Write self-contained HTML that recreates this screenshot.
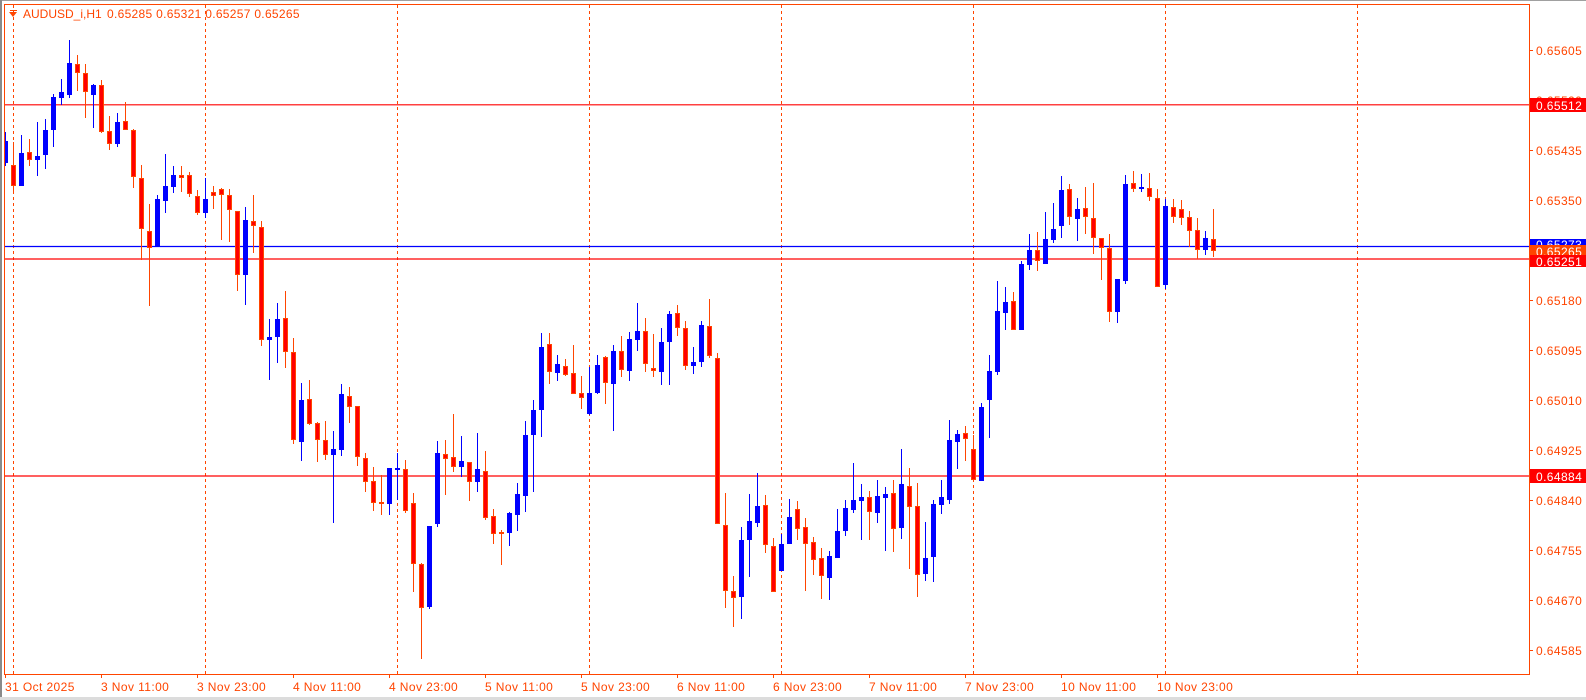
<!DOCTYPE html>
<html><head><meta charset="utf-8">
<style>
html,body{margin:0;padding:0;background:#fff;}
body{width:1586px;height:700px;overflow:hidden;position:relative;}
svg{position:absolute;left:0;top:0;}
text{font-family:"Liberation Sans",sans-serif;font-size:12px;}
</style></head><body>
<svg id="s" width="1586" height="700" viewBox="0 0 1586 700" xmlns="http://www.w3.org/2000/svg">
<rect x="0" y="0" width="1586" height="700" fill="#fff"/>
<rect x="0" y="0" width="1586" height="1" fill="#a0a0a0"/>
<rect x="0" y="0" width="2" height="700" fill="#8a8a8a"/>
<rect x="0" y="697" width="1586" height="3" fill="#dcdcdc"/>
<g id="grid" stroke="#ff4500" stroke-width="1" stroke-dasharray="3,3">
<line x1="13.5" y1="5" x2="13.5" y2="674"/>
<line x1="205.5" y1="5" x2="205.5" y2="674"/>
<line x1="397.5" y1="5" x2="397.5" y2="674"/>
<line x1="589.5" y1="5" x2="589.5" y2="674"/>
<line x1="781.5" y1="5" x2="781.5" y2="674"/>
<line x1="973.5" y1="5" x2="973.5" y2="674"/>
<line x1="1165.5" y1="5" x2="1165.5" y2="674"/>
<line x1="1357.5" y1="5" x2="1357.5" y2="674"/>
</g>
<g stroke-width="1.2">
<line x1="4" y1="104.8" x2="1529" y2="104.8" stroke="#ff0000"/>
<line x1="4" y1="246.5" x2="1529" y2="246.5" stroke="#0000ff"/>
<line x1="4" y1="259" x2="1529" y2="259" stroke="#ff0000"/>
<line x1="4" y1="476" x2="1529" y2="476" stroke="#ff0000"/>
</g>
<g id="candles"></g>
<rect x="4.5" y="4.5" width="1525" height="670" fill="none" stroke="#ff4500" stroke-width="1"/>
<g stroke="#ff4500">
<line x1="1529" y1="50.5" x2="1533" y2="50.5"/><line x1="1529" y1="100.5" x2="1533" y2="100.5"/>
<line x1="1529" y1="150.5" x2="1533" y2="150.5"/><line x1="1529" y1="200.5" x2="1533" y2="200.5"/>
<line x1="1529" y1="300.5" x2="1533" y2="300.5"/><line x1="1529" y1="350.5" x2="1533" y2="350.5"/>
<line x1="1529" y1="400.5" x2="1533" y2="400.5"/><line x1="1529" y1="450.5" x2="1533" y2="450.5"/>
<line x1="1529" y1="500.5" x2="1533" y2="500.5"/><line x1="1529" y1="550.5" x2="1533" y2="550.5"/>
<line x1="1529" y1="600.5" x2="1533" y2="600.5"/><line x1="1529" y1="650.5" x2="1533" y2="650.5"/>
<line x1="5.5" y1="674" x2="5.5" y2="678"/><line x1="101.5" y1="674" x2="101.5" y2="678"/>
<line x1="197.5" y1="674" x2="197.5" y2="678"/><line x1="293.5" y1="674" x2="293.5" y2="678"/>
<line x1="389.5" y1="674" x2="389.5" y2="678"/><line x1="485.5" y1="674" x2="485.5" y2="678"/>
<line x1="581.5" y1="674" x2="581.5" y2="678"/><line x1="677.5" y1="674" x2="677.5" y2="678"/>
<line x1="773.5" y1="674" x2="773.5" y2="678"/><line x1="869.5" y1="674" x2="869.5" y2="678"/>
<line x1="965.5" y1="674" x2="965.5" y2="678"/><line x1="1061.5" y1="674" x2="1061.5" y2="678"/>
<line x1="1157.5" y1="674" x2="1157.5" y2="678"/>
</g>
<g fill="#ff4500" letter-spacing="0.4">
<text x="1536" y="55">0.65605</text>
<text x="1536" y="105">0.65520</text>
<text x="1536" y="155">0.65435</text>
<text x="1536" y="205">0.65350</text>
<text x="1536" y="305">0.65180</text>
<text x="1536" y="355">0.65095</text>
<text x="1536" y="405">0.65010</text>
<text x="1536" y="455">0.64925</text>
<text x="1536" y="505">0.64840</text>
<text x="1536" y="555">0.64755</text>
<text x="1536" y="605">0.64670</text>
<text x="1536" y="655">0.64585</text>
</g>
<g fill="#ff4500" letter-spacing="0.4">
<text x="5" y="691">31 Oct 2025</text>
<text x="101" y="691">3 Nov 11:00</text>
<text x="197" y="691">3 Nov 23:00</text>
<text x="293" y="691">4 Nov 11:00</text>
<text x="389" y="691">4 Nov 23:00</text>
<text x="485" y="691">5 Nov 11:00</text>
<text x="581" y="691">5 Nov 23:00</text>
<text x="677" y="691">6 Nov 11:00</text>
<text x="773" y="691">6 Nov 23:00</text>
<text x="869" y="691">7 Nov 11:00</text>
<text x="965" y="691">7 Nov 23:00</text>
<text x="1061" y="691">10 Nov 11:00</text>
<text x="1157" y="691">10 Nov 23:00</text>
</g>
<rect x="1530" y="98" width="56" height="14" fill="#ff0000"/>
<text x="1536" y="110" fill="#fff" letter-spacing="0.4">0.65512</text>
<rect x="1530" y="239" width="56" height="8" fill="#0000ff"/>
<text x="1536" y="249" fill="#fff" letter-spacing="0.4">0.65273</text>
<rect x="1530" y="245" width="56" height="10" fill="#ff4500"/>
<text x="1536" y="256" fill="#fff" letter-spacing="0.4">0.65265</text>
<rect x="1530" y="255" width="56" height="12" fill="#ff0000"/>
<text x="1536" y="266" fill="#fff" letter-spacing="0.4">0.65251</text>
<rect x="1530" y="469" width="56" height="14" fill="#ff0000"/>
<text x="1536" y="481" fill="#fff" letter-spacing="0.4">0.64884</text>
<rect x="10" y="10" width="7" height="1" fill="#ff4500"/>
<polygon points="9,12 17,12 13,17" fill="#ff4500"/>
<text x="23" y="18" fill="#ff4500">AUDUSD_i,H1</text>
<text x="107" y="18" fill="#ff4500" letter-spacing="0.3">0.65285 0.65321 0.65257 0.65265</text>
</svg>
<script>
var d="b 141 163 132 166|r 165 186 142 192|b 153 186 135 186|r 152 160 139 166|b 156 160 122 176|b 130 155 119 169|b 97 130 94 147|b 92 98 79 105|b 63 95 40 98|r 64 73 55 91|r 73 92 64 118|b 85 95 84 128|r 85 132 80 133|r 131 144 116 150|b 122 144 113 147|r 121 130 102 130|r 130 177 129 188|r 178 229 165 260|r 231 248 204 306|b 199 247 195 247|b 186 201 154 213|b 175 187 166 193|r 175 178 166 192|r 175 194 172 197|r 196 213 190 215|b 199 213 178 218|r 192 196 186 209|r 189 195 188 240|r 195 210 189 242|r 211 275 211 291|b 220 275 207 305|r 221 226 195 253|r 227 340 221 346|b 337 340 319 380|b 319 337 303 363|r 318 352 291 368|r 352 440 338 444|b 400 442 383 461|r 399 424 380 425|r 423 440 422 462|r 440 455 421 460|b 449 455 431 523|b 394 450 384 456|r 396 407 387 423|r 406 457 406 466|r 458 482 453 492|r 481 503 467 511|r 502 503 475 515|b 468 504 468 515|b 468 470 453 500|r 469 511 460 513|r 503 564 493 592|r 564 608 563 659|b 526 607 526 609|b 453 524 441 527|r 454 459 440 495|r 457 467 414 472|b 461 467 436 477|r 462 482 462 501|b 469 482 433 492|r 471 518 451 520|r 516 534 509 544|r 532 533 530 565|b 513 533 512 546|b 494 515 483 531|b 435 496 421 512|b 410 435 400 492|b 347 410 333 437|r 344 372 333 384|b 364 373 355 381|r 366 375 359 376|r 373 394 345 394|r 393 398 376 409|b 393 414 367 415|b 365 393 355 394|r 357 383 356 404|b 351 384 345 431|r 351 370 336 377|b 339 371 332 381|b 331 340 303 351|r 331 364 318 372|r 368 371 334 377|b 342 372 328 385|b 314 342 311 385|r 313 328 305 336|r 328 366 321 370|b 362 366 347 374|b 325 362 321 367|r 326 356 299 358|r 358 524 353 524|r 525 591 493 608|r 591 598 576 627|b 540 597 527 619|b 521 540 494 577|b 506 523 473 527|r 505 545 495 553|r 546 592 538 592|b 544 571 534 571|b 517 544 499 544|r 509 529 501 540|r 527 544 518 591|r 542 560 537 575|r 558 576 548 599|b 556 578 551 600|b 531 558 509 558|b 508 531 500 536|b 500 510 463 513|b 497 501 484 540|r 497 512 491 540|b 496 513 480 523|b 494 498 487 551|r 493 529 480 552|b 484 528 449 539|r 486 507 468 569|r 506 575 483 597|b 558 574 522 581|b 504 557 500 582|b 497 505 480 514|b 440 500 420 504|b 434 442 430 469|r 433 439 426 461|r 449 480 435 480|b 407 481 403 481|b 371 400 355 438|b 311 372 281 375|b 302 313 287 330|r 301 330 292 330|b 264 330 261 330|b 250 265 234 270|r 250 261 232 271|b 239 264 212 264|b 229 240 203 243|b 190 226 176 238|r 189 217 184 225|b 209 219 198 241|r 208 217 187 234|r 218 238 183 254|r 238 248 238 280|r 248 312 234 322|b 279 312 279 323|b 184 281 175 284|r 183 189 171 192|b 187 189 174 192|r 188 197 173 201|r 198 287 189 287|b 206 285 199 289|r 207 217 199 223|r 209 218 200 225|r 217 231 211 247|r 230 250 218 259|b 238 250 231 255|r 239 251 209 257".split("|");
var ns="http://www.w3.org/2000/svg",g=document.getElementById("candles"),h="";
for(var k=0;k<d.length;k++){var p=d[k].split(" "),c=p[0],t=+p[1],b=+p[2],hi=+p[3],lo=+p[4],cx=5+8*k;
if(b-t<2)b=t+2;
if(c=="b"){h+='<line x1="'+(cx+0.5)+'" y1="'+hi+'" x2="'+(cx+0.5)+'" y2="'+lo+'" stroke="#0000ff"/>';
h+='<rect x="'+(cx-2)+'" y="'+t+'" width="5" height="'+(b-t)+'" fill="#0000ff"/>';}
else{h+='<line x1="'+(cx+0.5)+'" y1="'+hi+'" x2="'+(cx+0.5)+'" y2="'+lo+'" stroke="#ff4500"/>';
h+='<rect x="'+(cx-1.5)+'" y="'+(t+0.5)+'" width="4" height="'+(b-t-1)+'" fill="#ff0000" stroke="#ff4500" stroke-width="1"/>';}}
g.innerHTML=h;
g.setAttribute("clip-path","url(#cp)");
var defs=document.createElementNS(ns,"defs");defs.innerHTML='<clipPath id="cp"><rect x="5" y="5" width="1524" height="669"/></clipPath>';
document.getElementById("s").appendChild(defs);
</script>
</body></html>
